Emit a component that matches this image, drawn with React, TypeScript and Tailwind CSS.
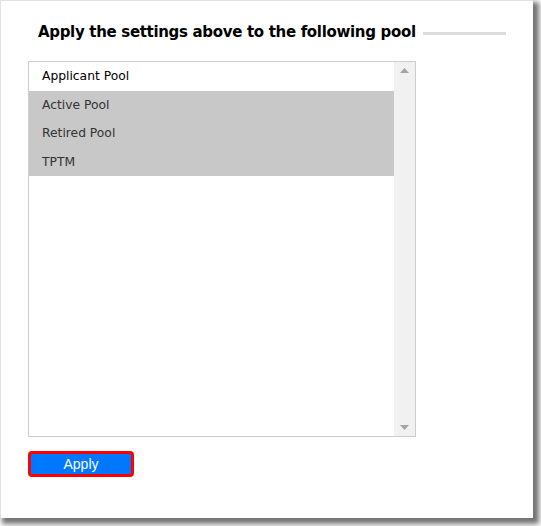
import { useState } from 'react';

const pools = ['Applicant Pool', 'Active Pool', 'Retired Pool', 'TPTM'];

export default function App() {
  const [selected, setSelected] = useState<Record<string, boolean>>({
    'Active Pool': true,
    'Retired Pool': true,
    TPTM: true,
  });

  return (
    <div className="w-[541px] h-[526px] bg-white">
      <div className="w-[533px] h-[518px] bg-white border-t border-l border-[#e2e2e2] shadow-[4px_4px_5px_2px_rgba(0,0,0,0.55)] pt-[20px] pl-[27px]">
        <div className="flex items-center pl-[10px] w-[478px]">
          <h2 className="text-[15px] font-bold text-black leading-[22px] whitespace-nowrap font-['DejaVu_Sans',Verdana,sans-serif] tracking-[-0.32px]">
            Apply the settings above to the following pool
          </h2>
          <div className="flex-1 h-[3px] bg-[#dcdcdc] ml-[7px] mt-[2px]" />
        </div>

        <div className="mt-[18px] w-[388px] h-[376px] border border-[#cdcdcd] flex font-['DejaVu_Sans',Tahoma,sans-serif] text-[12.3px]">
          <div className="flex-1 flex flex-col">
            {pools.map(p => (
              <div
                key={p}
                onClick={() => setSelected(s => ({ ...s, [p]: !s[p] }))}
                className={
                  selected[p]
                    ? 'h-[28.5px] leading-[29px] pl-[13px] bg-[#c8c8c8] text-[#333] cursor-default'
                    : 'h-[28.5px] leading-[29px] pl-[13px] bg-white text-black cursor-default'
                }
              >
                {p}
              </div>
            ))}
          </div>
          <div className="w-[21px] bg-[#f1f1f1] flex flex-col justify-between items-center py-[6px]">
            <svg width="9" height="5" viewBox="0 0 9 5"><path d="M4.5 0L9 5H0z" fill="#a3a3a3" /></svg>
            <svg width="9" height="5" viewBox="0 0 9 5"><path d="M0 0h9L4.5 5z" fill="#a3a3a3" /></svg>
          </div>
        </div>

        <button className="mt-[14px] w-[106px] h-[26px] bg-[#0077ff] border-[3px] border-[#ff0000] rounded-[4px] text-white text-[14px] leading-[18px] font-['Liberation_Sans',Arial,sans-serif]">
          Apply
        </button>
      </div>
    </div>
  );
}
